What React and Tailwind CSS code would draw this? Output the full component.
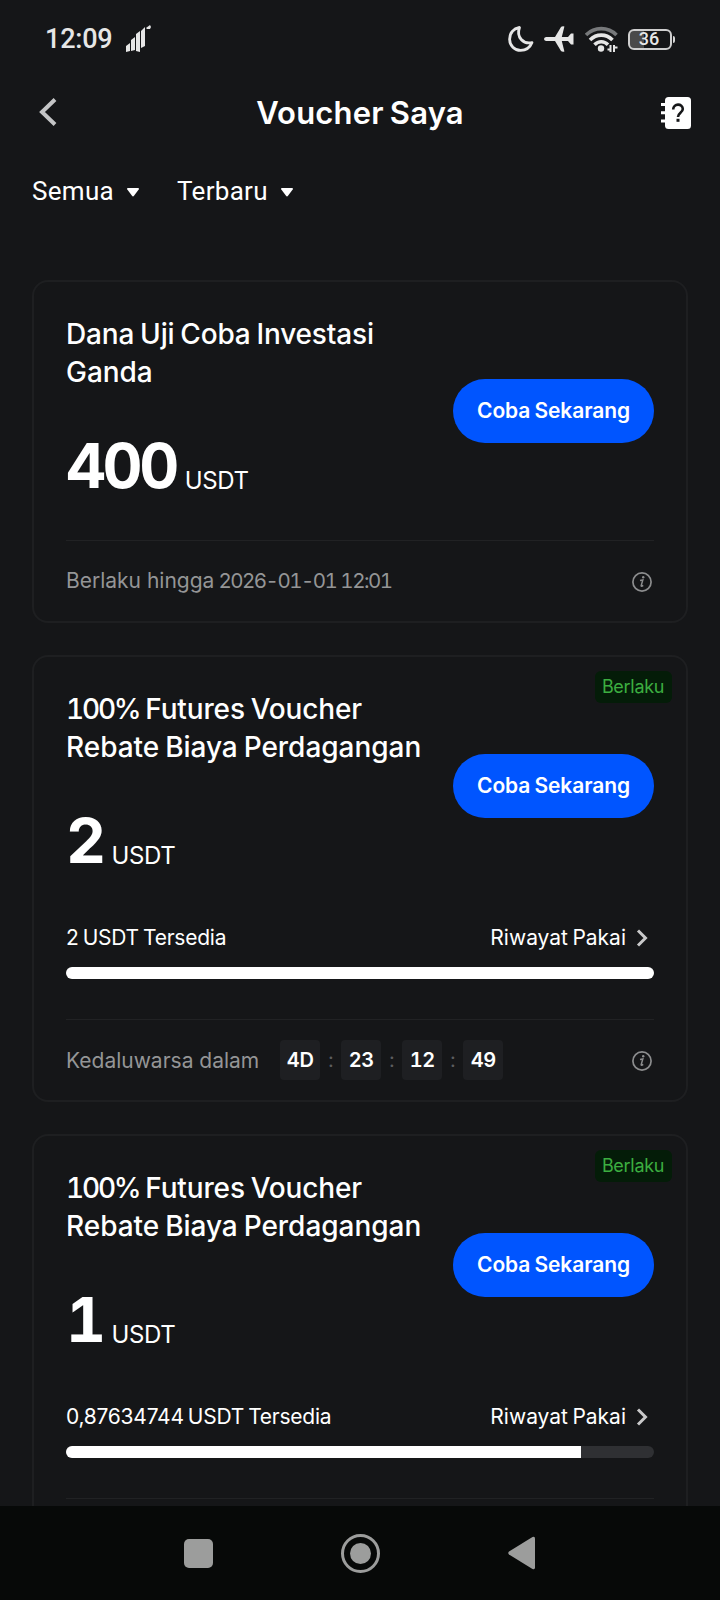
const vouchers = [
  {
    id: 1,
    title: 'Dana Uji Coba Investasi',
    subtitle: 'Ganda',
    amount: '400',
    footer: 'Berlaku hingga',
    expiry: '2026-01-01 12:01',
  },
  {
    id: 2,
    rate: '100%',
    title: 'Futures Voucher',
    subtitle: 'Rebate Biaya Perdagangan',
    amount: '2',
    badge: 'Berlaku',
    available: '2 USDT Tersedia',
    percent: 100,
    footer: 'Kedaluwarsa dalam',
    countdown: ['4D', '23', '12', '49'],
  },
  {
    id: 3,
    rate: '100%',
    title: 'Futures Voucher',
    subtitle: 'Rebate Biaya Perdagangan',
    amount: '1',
    badge: 'Berlaku',
    available: '0,87634744 USDT Tersedia',
    percent: 87.634744,
  },
];

function StatusBar() {
  return (
    <div className="flex h-[78px] shrink-0 items-center justify-between pl-[45px] pr-[45px] text-[#e6e6e6]">
      <div className="flex items-center gap-[13px]">
        <span className="font-[Roboto,sans-serif] text-[27px] font-medium leading-none tracking-[-0.2px]">12:09</span>
        <svg width="26" height="28" viewBox="0 0 26 28" fill="currentColor">
          <path d="M0 21l4-3v8l-4 1zM5 15l4-3v13l-4 1zM10 9l4-3v21l-4-1zM15 6l4-4v19l-4 2z" />
          <path d="M20 3l4-3 1 2-1 2-3 0z" />
        </svg>
      </div>
      <div className="flex items-center">
        <svg width="26" height="26" viewBox="0 0 26 26" fill="none" stroke="currentColor" strokeWidth="2.8" strokeLinejoin="round">
          <path d="M11.500 1.500C5.500 2.600 1.600 7 1.600 13.200c0 6.300 5 11.200 11 11.200 5.200 0 9.400-2.700 11.400-7.800C15.500 18.500 8 11.500 11.500 1.500z" />
        </svg>
        <svg className="ml-[10px]" width="30" height="26" viewBox="0 0 30 26" fill="currentColor">
          <path d="M2 11h9L17 1q1.200-1.200 3.400-.6L17.800 11h6.200L27 7.500h2.500v11H27l-3-3.500h-6.200L20.400 25.600q-2.200.6-3.400-.6L11 15H2q-2-.3-2-2t2-2z" />
        </svg>
        <svg className="ml-[11px]" width="33" height="27" viewBox="0 0 33 27" fill="none" strokeWidth="3.600">
          <path d="M1 9C9.500.500 23 .500 31.500 9" stroke="#77797b" />
          <path d="M5 14c6.500-6.500 16-6.500 22.500 0" stroke="currentColor" />
          <path d="M9.500 18.800c4-4 9.500-4 13.500 0" stroke="currentColor" />
          <circle cx="16" cy="22.500" r="3.200" fill="currentColor" />
          <path d="M25.500 19v7M29 19v7M22.500 23.500h3M29 21.500h3.500" stroke="currentColor" strokeWidth="2" />
        </svg>
        <div className="ml-[10px] flex items-center">
          <div className="flex h-[21px] w-[44px] items-center justify-center rounded-[6px] border-2 border-[#cfcfcf] bg-linear-to-r from-[#4a4a4a] from-35% to-[#151618] to-35% pr-[2px] font-[Roboto,sans-serif] text-[18px] font-medium leading-none">
            36
          </div>
          <div className="ml-px h-[7px] w-[2px] rounded-r-sm bg-[#d6d6d6]" />
        </div>
      </div>
    </div>
  );
}

function Header() {
  return (
    <header className="flex h-[70px] shrink-0 items-center justify-between pl-[39px] pr-[29px]">
      <svg className="mb-[2px]" width="20" height="28" viewBox="0 0 20 28" fill="none" stroke="#c4c5c6" strokeWidth="4">
        <path d="M16 1.500L3 14l13 12.500" />
      </svg>
      <h1 className="mb-[2px] text-[31px] font-semibold leading-none tracking-[0.2px] [word-spacing:-2px]">Voucher Saya</h1>
      <svg width="30" height="32" viewBox="0 0 30 32" fill="none">
        <rect x="4" width="26" height="32" rx="3.500" fill="#fff" />
        <path d="M0 7.500h6M0 15.700h6M0 24h6" stroke="#fff" strokeWidth="3" />
        <path d="M12.200 12.500c0-6.500 9.600-6.300 9.600-.5 0 3.800-4.800 3.800-4.800 8" stroke="#151618" strokeWidth="2.600" />
        <rect x="15.500" y="21.800" width="3" height="3" fill="#151618" />
      </svg>
    </header>
  );
}

function Filter({ label }) {
  return (
    <button className="flex items-center gap-[13px] font-[Roboto,sans-serif] text-[26px] leading-none tracking-[0.3px]">
      {label}
      <svg className="mt-[3px]" width="12" height="9" viewBox="0 0 12 9" fill="#fff">
        <path d="M1 0h10q1.500.2.700 1.400L7 7.800q-1 1.200-2 0L.3 1.400Q-.5.200 1 0z" />
      </svg>
    </button>
  );
}

function InfoIcon() {
  return (
    <svg className="mr-[2px] mt-[2px]" width="20" height="20" viewBox="0 0 20 20" fill="none" stroke="#8c8d8e">
      <circle cx="10" cy="10" r="9.100" strokeWidth="1.700" />
      <path d="M8 8.600l2.800-.6-1.600 5.600q-.2 1.400 2-.3" strokeWidth="1.500" />
      <circle cx="11.200" cy="5.300" r="1.200" fill="#8c8d8e" stroke="none" />
    </svg>
  );
}

function Countdown({ parts }) {
  return (
    <div className="ml-[21px] flex items-center">
      {parts.map((part, i) => (
        <div key={i} className="flex items-center">
          {i > 0 && <span className="w-[21px] text-center text-[20px] leading-none text-[#5d5e60]">:</span>}
          <span className="flex size-10 items-center justify-center rounded-[4px] bg-[#1e1f22] text-[20px] font-semibold leading-none tabular-nums tracking-[-0.3px]">
            {part}
          </span>
        </div>
      ))}
    </div>
  );
}

function VoucherCard({ voucher }) {
  return (
    <section className="relative shrink-0 rounded-2xl border-2 border-[#1e1f21] px-8 pt-8">
      {voucher.badge && (
        <span className="absolute right-[14px] top-[14px] flex h-8 w-[77px] items-center justify-center rounded-[6px] bg-[#041c08] pr-px text-[18px] leading-none tracking-[-0.3px] text-[#3cae40]">
          {voucher.badge}
        </span>
      )}
      <div className="flex h-[194px] items-center justify-between">
        <div className="h-full pt-px">
          <h2 className="whitespace-nowrap text-[28px] font-medium leading-[38px] tracking-[-0.15px] [word-spacing:-1.5px]">
            {voucher.rate && <span className="mr-[2px] tabular-nums tracking-[-2.2px]">{voucher.rate} </span>}
            {voucher.title}
            <br />
            <span className="tracking-[-0.03px]">{voucher.subtitle}</span>
          </h2>
          <div className="mt-[37px] flex items-baseline gap-[9px]">
            <span className="text-[62px] font-bold leading-[76px] tracking-[-3.5px] tabular-nums">{voucher.amount}</span>
            <span className="translate-y-px text-[24px] tracking-[-0.4px]">USDT</span>
          </div>
        </div>
        <button className="h-16 w-[201px] shrink-0 rounded-full bg-[#0055ff] text-[21px] font-semibold tracking-[-0.1px] [word-spacing:-1px]">
          Coba Sekarang
        </button>
      </div>
      {voucher.available && (
        <div className="h-[104px] pt-[36px]">
          <div className="flex h-[60px] flex-col justify-between text-[21px] leading-[26px] tracking-[-0.25px] [word-spacing:-1.5px]">
            <div className="flex items-center justify-between pt-[6px]">
              <span>{voucher.available}</span>
              <span className="flex items-center gap-[10px] pr-[6px] tracking-[0px]">
                Riwayat Pakai
                <svg width="12" height="18" viewBox="0 0 12 18" fill="none" stroke="#c9c9ca" strokeWidth="3">
                  <path d="M2 1.500L9.500 9 2 16.500" />
                </svg>
              </span>
            </div>
            <div className="h-3 overflow-hidden rounded-full bg-[#2f3033]">
              <div className="h-full bg-white" style={{ width: `${voucher.percent}%` }} />
            </div>
          </div>
        </div>
      )}
      <div className="mt-8 flex h-[81px] items-center border-t border-[#212224]">
        {voucher.footer && (
          <>
            <p className="text-[21px] leading-none text-[#949596]">
              {voucher.footer}
              {voucher.expiry && (
                <span className="text-[20.5px] tabular-nums tracking-[-1.5px]"> {voucher.expiry}</span>
              )}
            </p>
            {voucher.countdown && <Countdown parts={voucher.countdown} />}
            <span className="ml-auto">
              <InfoIcon />
            </span>
          </>
        )}
      </div>
    </section>
  );
}

function NavBar() {
  return (
    <nav className="flex h-[94px] shrink-0 items-center justify-between bg-[#070908] pl-[184px] pr-[184px]">
      <div className="size-[29px] rounded-[5px] bg-[#9c9d9c]" />
      <div className="mr-px flex size-[39px] items-center justify-center rounded-full border-[3px] border-[#9c9d9c]">
        <div className="size-[21px] rounded-full bg-[#9c9d9c]" />
      </div>
      <svg width="28" height="34" viewBox="0 0 28 34" fill="#9c9d9c">
        <path d="M1 15.500L24.500 1q2.500-1 2.500 1.500v29q0 2.500-2.500 1.500L1 18.500q-1.500-1.500 0-3z" />
      </svg>
    </nav>
  );
}

export default function App() {
  return (
    <div className="flex h-[1600px] w-[720px] flex-col overflow-hidden bg-[#151618] font-[Inter,sans-serif] text-white">
      <StatusBar />
      <Header />
      <div className="flex h-[86px] shrink-0 items-center gap-[38px] px-8">
        <Filter label="Semua" />
        <Filter label="Terbaru" />
      </div>
      <main className="flex min-h-0 flex-1 flex-col gap-8 overflow-hidden px-8 pt-[46px]">
        {vouchers.map((voucher) => (
          <VoucherCard key={voucher.id} voucher={voucher} />
        ))}
      </main>
      <NavBar />
    </div>
  );
}
